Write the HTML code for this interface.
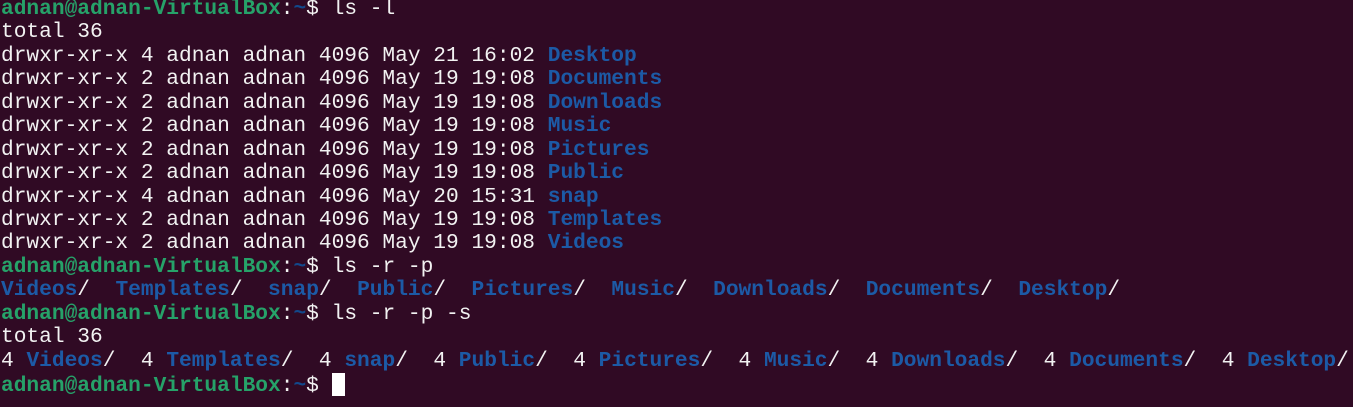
<!DOCTYPE html>
<html><head><meta charset="utf-8"><style>
html,body{margin:0;padding:0;background:#300a24;width:1353px;height:407px;overflow:hidden}
pre{margin:0;position:absolute;left:1px;top:-2px;font-family:"Liberation Mono",monospace;font-size:21.2px;line-height:23.43px;color:#f2f2f2;white-space:pre;letter-spacing:0}
.g{color:#26a269;font-weight:bold}.b{color:#12488b;font-weight:bold}.d{color:#1c5aa6;font-weight:bold}
.c{display:inline-block;width:13px;height:23px;background:#fff;vertical-align:-5px}
</style></head><body><pre><span class="g">adnan@adnan-VirtualBox</span>:<span class="b">~</span>$ ls -l
total 36
drwxr-xr-x 4 adnan adnan 4096 May 21 16:02 <span class="d">Desktop</span>
drwxr-xr-x 2 adnan adnan 4096 May 19 19:08 <span class="d">Documents</span>
drwxr-xr-x 2 adnan adnan 4096 May 19 19:08 <span class="d">Downloads</span>
drwxr-xr-x 2 adnan adnan 4096 May 19 19:08 <span class="d">Music</span>
drwxr-xr-x 2 adnan adnan 4096 May 19 19:08 <span class="d">Pictures</span>
drwxr-xr-x 2 adnan adnan 4096 May 19 19:08 <span class="d">Public</span>
drwxr-xr-x 4 adnan adnan 4096 May 20 15:31 <span class="d">snap</span>
drwxr-xr-x 2 adnan adnan 4096 May 19 19:08 <span class="d">Templates</span>
drwxr-xr-x 2 adnan adnan 4096 May 19 19:08 <span class="d">Videos</span>
<span class="g">adnan@adnan-VirtualBox</span>:<span class="b">~</span>$ ls -r -p
<span class="d">Videos</span>/  <span class="d">Templates</span>/  <span class="d">snap</span>/  <span class="d">Public</span>/  <span class="d">Pictures</span>/  <span class="d">Music</span>/  <span class="d">Downloads</span>/  <span class="d">Documents</span>/  <span class="d">Desktop</span>/
<span class="g">adnan@adnan-VirtualBox</span>:<span class="b">~</span>$ ls -r -p -s
total 36
4 <span class="d">Videos</span>/  4 <span class="d">Templates</span>/  4 <span class="d">snap</span>/  4 <span class="d">Public</span>/  4 <span class="d">Pictures</span>/  4 <span class="d">Music</span>/  4 <span class="d">Downloads</span>/  4 <span class="d">Documents</span>/  4 <span class="d">Desktop</span>/
<span class="g">adnan@adnan-VirtualBox</span>:<span class="b">~</span>$ <span class="c"></span></pre></body></html>
